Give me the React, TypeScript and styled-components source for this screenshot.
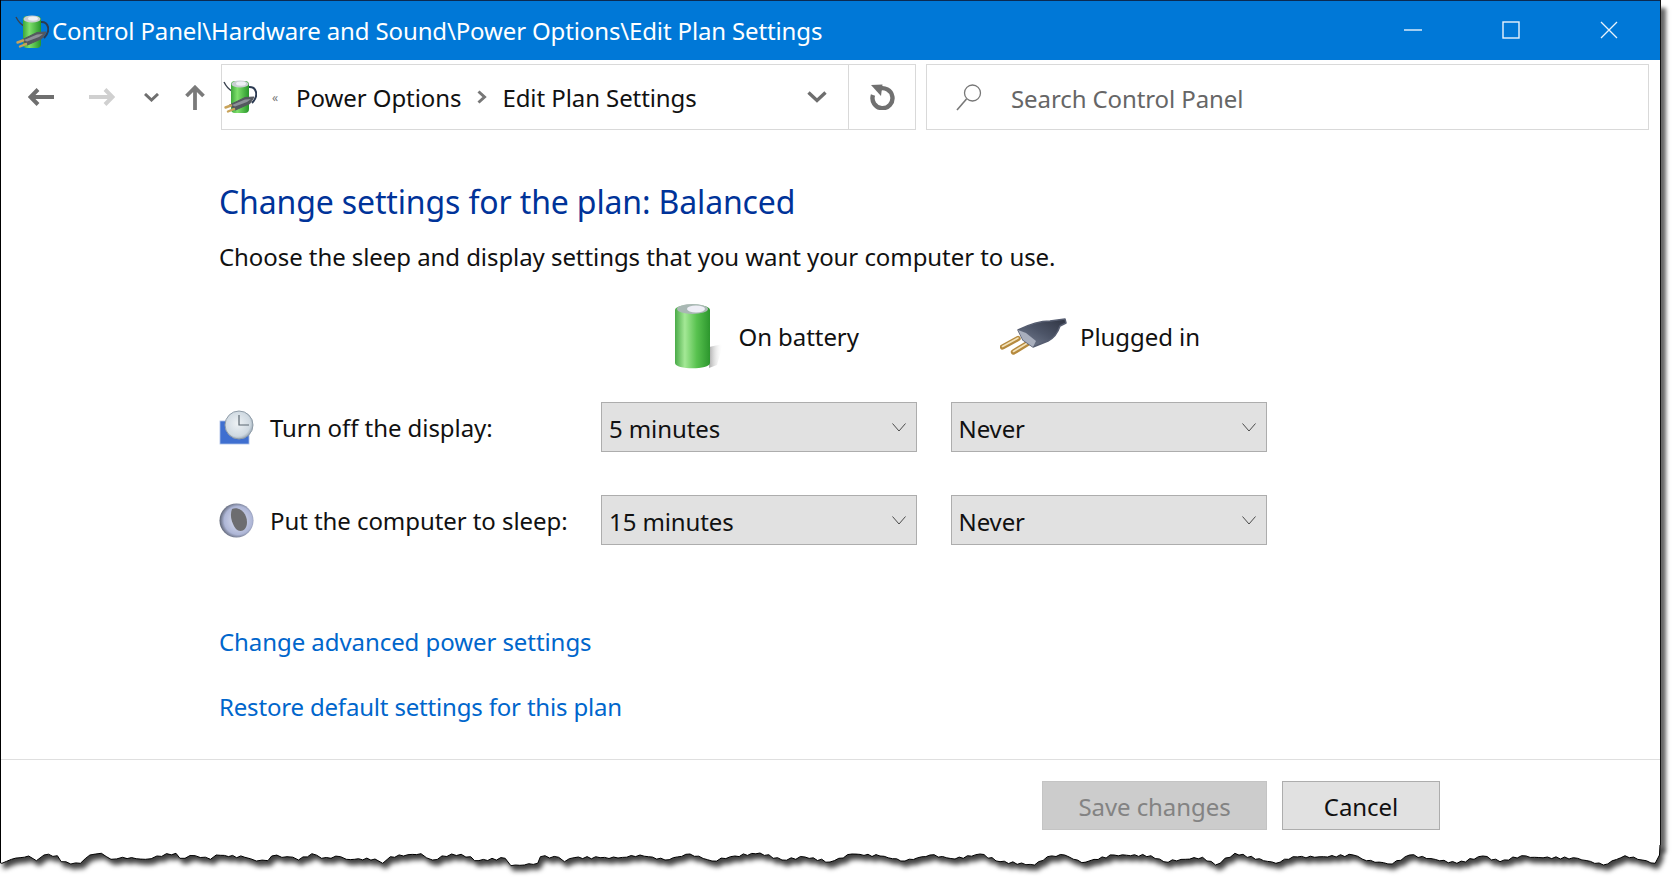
import React, { useId } from "react";
import styled, { createGlobalStyle } from "styled-components";

const GlobalStyle = createGlobalStyle`
  html, body {
    margin: 0;
    padding: 0;
    background: #fff;
  }
  body {
    width: 1676px;
    height: 884px;
    overflow: hidden;
    font-family: "Noto Sans", "Open Sans", sans-serif;
    color: #111;
  }
`;

// torn bottom edge, read off the reference
const LEFT_EDGE = [
  [5, 370], [30, 358], [75, 348], [95, 362], [115, 345], [150, 347], [160, 365], [185, 372], [210, 370],
  [235, 345], [265, 340], [290, 358], [320, 352], [380, 358], [410, 348], [460, 340], [470, 355], [510, 347],
  [550, 358], [565, 345], [640, 352], [670, 363], [700, 362], [710, 348], [750, 350], [780, 360], [815, 341],
  [840, 355], [890, 350], [905, 358], [980, 357], [1000, 370], [1020, 350], [1100, 341], [1130, 360],
  [1180, 342], [1230, 350], [1240, 362], [1320, 355], [1335, 377], [1370, 375], [1405, 370], [1412, 350],
  [1460, 352], [1475, 365], [1500, 353], [1568, 353],
].map(([x, y]) => [x / 2.613, y / 3 - 105]);

const MIDDLE_EDGE = [
  [618, 13], [640, 10], [665, 15], [690, 9], [712, 16], [735, 11], [760, 8], [782, 15], [805, 12], [830, 17],
  [852, 9], [880, 11], [905, 16], [930, 10], [955, 14], [980, 9],
];

const RIGHT_EDGE = [
  [0, 365], [80, 375], [110, 350], [150, 345], [190, 368], [265, 345], [350, 347], [380, 365], [470, 352],
  [500, 375], [545, 340], [640, 370], [680, 350], [730, 352], [820, 345], [850, 362], [910, 372], [950, 345],
  [1060, 370], [1120, 348], [1160, 365], [1210, 347], [1240, 352], [1340, 355], [1400, 375], [1450, 347],
  [1520, 370], [1530, 345],
].map(([x, y]) => [1000 + x / 2.32, y / 3 - 105]);

function buildTornPath() {
  const points = [...LEFT_EDGE, ...MIDDLE_EDGE, ...RIGHT_EDGE];
  let d = "M0.5 0 L0.5 18";
  points.forEach(([x, y], i) => {
    if (i > 0) {
      const [px, py] = points[i - 1];
      const steps = Math.floor((x - px) / 4);
      for (let s = 1; s < steps; s++) {
        const t = s / steps;
        const wobble = Math.sin(i * 12.9 + s * 78.2) * 1.1;
        d += ` L${(px + (x - px) * t).toFixed(1)} ${(py + (y - py) * t + wobble).toFixed(1)}`;
      }
    }
    d += ` L${x.toFixed(1)} ${y.toFixed(1)}`;
  });
  return d + " L1660 0";
}

function PowerPlanIcon() {
  const id = useId();
  return (
    <SmallPlanSvg viewBox="0 0 34 34">
      <defs>
        <linearGradient id={`${id}g`} x1="0" x2="1" y1="0" y2="0">
          <stop offset="0" stopColor="#3da63a" />
          <stop offset="0.35" stopColor="#7fe06c" />
          <stop offset="1" stopColor="#27962a" />
        </linearGradient>
      </defs>
      <path d="M1 2 C3 6 5 9 9 11" fill="none" stroke="#39424f" strokeWidth="1.4" />
      <path d="M25 7 C34 6 36 16 29 23" fill="none" stroke="#2b3a52" strokeWidth="2" />
      <rect x="8" y="1" width="18" height="32" rx="4" fill={`url(#${id}g)`} />
      <ellipse cx="17" cy="4" rx="8.5" ry="3.6" fill="#c9ced2" />
      <ellipse cx="18" cy="3.6" rx="5" ry="2.2" fill="#eef0f4" />
      <path d="M6.5 25 L22 17.5 L31 17 L27 23.5 L12.5 30 Z" fill="#54585f" stroke="#54585f" strokeLinejoin="round" />
      <path d="M9 25 L22 19.5 L28 19 L24 22 L12 26.5 Z" fill="#8d9198" />
      <path d="M2.5 27.5 L8 25.5 M5 31.5 L11 29" stroke="#c9a35a" strokeWidth="2.4" strokeLinecap="round" />
    </SmallPlanSvg>
  );
}

function BatteryIcon() {
  const id = useId();
  return (
    <BatterySvg viewBox="0 0 52 68">
      <defs>
        <linearGradient id={`${id}b`} x1="0" x2="1" y1="0" y2="0">
          <stop offset="0" stopColor="#4aab48" />
          <stop offset="0.28" stopColor="#a4e896" />
          <stop offset="0.62" stopColor="#58c24f" />
          <stop offset="1" stopColor="#2c962d" />
        </linearGradient>
        <linearGradient id={`${id}s`} x1="0" x2="1" y1="0" y2="0">
          <stop offset="0" stopColor="#8f8f8f" stopOpacity="0.75" />
          <stop offset="1" stopColor="#fff" stopOpacity="0" />
        </linearGradient>
      </defs>
      <path d="M36 44 L50 41 L44 62 L36 65 Z" fill={`url(#${id}s)`} />
      <path d="M2 7 C2 0 37 0 37 7 L37 60 C37 67 2 67 2 60 Z" fill={`url(#${id}b)`} />
      <ellipse cx="19.5" cy="6" rx="15.5" ry="5" fill="#a9b8b4" />
      <ellipse cx="23" cy="6" rx="9" ry="3.4" fill="#eeeef6" />
    </BatterySvg>
  );
}

function PlugIcon() {
  const id = useId();
  return (
    <PlugSvg viewBox="0 0 68 37">
      <defs>
        <linearGradient id={`${id}p`} x1="0" x2="1" y1="1" y2="0">
          <stop offset="0" stopColor="#7c8598" />
          <stop offset="0.5" stopColor="#4d5568" />
          <stop offset="1" stopColor="#2f3442" />
        </linearGradient>
      </defs>
      <path d="M2.5 29 L18 20.5 M13.5 34 L30 24" stroke="#b68a3e" strokeWidth="5.4" strokeLinecap="round" />
      <path d="M2.5 28.5 L18 20 M13.5 33.5 L30 23.5" stroke="#f3e2b8" strokeWidth="1.6" strokeLinecap="round" />
      <path
        d="M18 12 C28 7 40 3 50 3 L65 1 L66 5 L60 8 C58 14 54 20 48 23 L33 29 L23 22 Z"
        fill={`url(#${id}p)`}
        stroke="#565d70"
        strokeWidth="1.5"
        strokeLinejoin="round"
      />
      <path d="M18 12 L23 22 L33 29 L36 23 L26 15 Z" fill="#a9afbd" />
    </PlugSvg>
  );
}

function ClockIcon() {
  const id = useId();
  return (
    <RowIconSvg viewBox="0 0 35 35">
      <defs>
        <radialGradient id={`${id}c`} cx="0.45" cy="0.45" r="0.6">
          <stop offset="0" stopColor="#eef2f5" />
          <stop offset="0.75" stopColor="#cfd9e1" />
          <stop offset="1" stopColor="#8d9ca9" />
        </radialGradient>
      </defs>
      <rect x="1" y="11" width="29" height="23" fill="#3f6fd0" stroke="#a9bde6" strokeWidth="0.8" />
      <circle cx="20" cy="15" r="14" fill={`url(#${id}c)`} stroke="#8f9ca8" strokeWidth="1" />
      <path d="M20 5 L20 15 L30 15" fill="none" stroke="#5b6770" strokeWidth="1.2" />
    </RowIconSvg>
  );
}

function MoonIcon() {
  const id = useId();
  return (
    <RowIconSvg viewBox="0 0 35 35">
      <defs>
        <radialGradient id={`${id}m`} cx="0.55" cy="0.5" r="0.55">
          <stop offset="0" stopColor="#dfe3f2" />
          <stop offset="0.75" stopColor="#aeb6d6" />
          <stop offset="1" stopColor="#5c6272" />
        </radialGradient>
      </defs>
      <circle cx="17.5" cy="17.5" r="17" fill={`url(#${id}m)`} />
      <path d="M13 6 C20 3 28 10 28 19 C28 28 21 30 17 26 C14 22 10 14 13 6 Z" fill="#6d6d70" />
    </RowIconSvg>
  );
}

function SelectChevron() {
  return (
    <ChevronSvg viewBox="0 0 14 9">
      <path d="M0.5 0.5 L7 8 L13.5 0.5" fill="none" stroke="#4a4a4a" strokeWidth="1" />
    </ChevronSvg>
  );
}

function Dropdown({ value }: { value: string }) {
  return (
    <Select>
      <SelectValue>{value}</SelectValue>
      <SelectChevron />
    </Select>
  );
}

export default function App() {
  return (
    <>
      <GlobalStyle />
      <Page>
        <Window>
          <TitleBar>
            <TitleIcon>
              <PowerPlanIcon />
            </TitleIcon>
            <TitleText>Control Panel\Hardware and Sound\Power Options\Edit Plan Settings</TitleText>
            <WindowControls>
              <WindowButton>
                <svg width="18" height="2" viewBox="0 0 18 2">
                  <path d="M0 1 H18" stroke="#e8f3fc" strokeWidth="1.4" />
                </svg>
              </WindowButton>
              <WindowButton>
                <svg width="18" height="18" viewBox="0 0 18 18">
                  <rect x="1" y="1" width="16" height="16" fill="none" stroke="#e8f3fc" strokeWidth="1.4" />
                </svg>
              </WindowButton>
              <WindowButton>
                <svg width="18" height="18" viewBox="0 0 18 18">
                  <path d="M1 1 L17 17 M17 1 L1 17" stroke="#e8f3fc" strokeWidth="1.3" />
                </svg>
              </WindowButton>
            </WindowControls>
          </TitleBar>

          <Toolbar>
            <NavArea>
              <NavIcon $left={27} width="26" height="18" viewBox="0 0 26 18">
                <path d="M26 9 H3 M10 1.5 L2.5 9 L10 16.5" fill="none" stroke="#6f6f6f" strokeWidth="4" />
              </NavIcon>
              <NavIcon $left={35} width="26" height="18" viewBox="0 0 26 18">
                <path d="M0 9 H23 M16 1.5 L23.5 9 L16 16.5" fill="none" stroke="#d0d0d0" strokeWidth="4" />
              </NavIcon>
              <NavIcon $left={29} width="15" height="9" viewBox="0 0 15 9">
                <path d="M1 1 L7.5 7 L14 1" fill="none" stroke="#6f6f6f" strokeWidth="3" />
              </NavIcon>
              <NavIcon $left={26} width="20" height="25" viewBox="0 0 20 25">
                <path d="M10 25 V3 M1.5 11 L10 2.5 L18.5 11" fill="none" stroke="#7a7a7a" strokeWidth="3.8" />
              </NavIcon>
            </NavArea>

            <AddressBar>
              <Breadcrumbs>
                <PowerPlanIcon />
                <Overflow>«</Overflow>
                <Crumb>Power Options</Crumb>
                <CrumbSeparator viewBox="0 0 10 14">
                  <path d="M1.5 1.5 L7.5 7 L1.5 12.5" fill="none" stroke="#777" strokeWidth="3" />
                </CrumbSeparator>
                <Crumb>Edit Plan Settings</Crumb>
              </Breadcrumbs>
              <svg width="20" height="12" viewBox="0 0 20 12">
                <path d="M1.5 1.5 L10 9.5 L18.5 1.5" fill="none" stroke="#6e6e6e" strokeWidth="3.4" />
              </svg>
              <RefreshButton>
                <svg width="25" height="26" viewBox="0 0 25 26">
                  <path d="M8.5 5 A10 10 0 1 1 3 11" fill="none" stroke="#707070" strokeWidth="4.4" />
                  <path d="M1 1 L12.5 0.5 L11 12 Z" fill="#707070" />
                </svg>
              </RefreshButton>
            </AddressBar>

            <SearchBox>
              <svg width="26" height="27" viewBox="0 0 26 27">
                <circle cx="16.5" cy="9" r="8" fill="none" stroke="#777" strokeWidth="1.3" />
                <path d="M10.5 15 L1 26" stroke="#777" strokeWidth="1.6" />
              </svg>
              <SearchText>Search Control Panel</SearchText>
            </SearchBox>
          </Toolbar>

          <Content>
            <Heading>Change settings for the plan: Balanced</Heading>
            <Description>Choose the sleep and display settings that you want your computer to use.</Description>

            <ColumnHeads>
              <span />
              <ColumnHead $inset={72}>
                <BatteryIcon />
                <ColumnLabel>On battery</ColumnLabel>
              </ColumnHead>
              <ColumnHead $inset={50}>
                <PlugIcon />
                <ColumnLabel>Plugged in</ColumnLabel>
              </ColumnHead>
            </ColumnHeads>

            <SettingsGrid>
              <RowLabel>
                <ClockIcon />
                <RowText>Turn off the display:</RowText>
              </RowLabel>
              <Dropdown value="5 minutes" />
              <Dropdown value="Never" />

              <RowLabel>
                <MoonIcon />
                <RowText>Put the computer to sleep:</RowText>
              </RowLabel>
              <Dropdown value="15 minutes" />
              <Dropdown value="Never" />
            </SettingsGrid>

            <Links>
              <TextLink $spacing={-0.07}>Change advanced power settings</TextLink>
              <TextLink $spacing={-0.18}>Restore default settings for this plan</TextLink>
            </Links>
          </Content>

          <Footer>
            <FooterButton $width={225} disabled>
              Save changes
            </FooterButton>
            <FooterButton $width={158}>Cancel</FooterButton>
          </Footer>
        </Window>

        <TornEdge viewBox="0 0 1676 39">
          <defs>
            <filter id="tornShadow" x="-2%" y="-50%" width="104%" height="220%">
              <feDropShadow dx="3" dy="5" stdDeviation="2.6" floodColor="#000" floodOpacity="0.75" />
            </filter>
          </defs>
          <path d={buildTornPath()} fill="#fff" stroke="#000" strokeWidth="1" filter="url(#tornShadow)" />
        </TornEdge>
      </Page>
    </>
  );
}

const Page = styled.div`
  width: 1676px;
  height: 884px;
  overflow: hidden;
`;

const Window = styled.div`
  box-sizing: border-box;
  width: 1661px;
  height: 845px;
  display: flex;
  flex-direction: column;
  background: #fff;
  border-left: 1px solid #000;
  border-right: 1px solid #111;
  box-shadow: 5px 8px 4px rgba(0, 0, 0, 0.6);
`;

const TitleBar = styled.div`
  box-sizing: border-box;
  height: 60px;
  flex: none;
  display: flex;
  align-items: center;
  background: #0078d7;
  border-top: 1px solid #0b2a52;
`;

const TitleIcon = styled.div`
  display: flex;
  margin-left: 14px;
  margin-top: 2px;
`;

const TitleText = styled.div`
  margin-left: 3px;
  color: #fff;
  font-size: 24px;
  letter-spacing: -0.14px;
  white-space: nowrap;
`;

const WindowControls = styled.div`
  margin-left: auto;
  padding-right: 2px;
  display: flex;
`;

const WindowButton = styled.div`
  box-sizing: border-box;
  width: 98px;
  height: 58px;
  padding-bottom: 2px;
  display: flex;
  align-items: center;
  justify-content: center;
`;

const Toolbar = styled.div`
  box-sizing: border-box;
  height: 74px;
  flex: none;
  display: flex;
  align-items: flex-start;
  padding-top: 4px;
`;

const NavArea = styled.div`
  width: 220px;
  height: 66px;
  flex: none;
  display: flex;
  align-items: center;
`;

const NavIcon = styled.svg<{ $left: number }>`
  flex: none;
  margin-left: ${(p) => p.$left}px;
`;

const AddressBar = styled.div`
  box-sizing: border-box;
  width: 695px;
  height: 66px;
  flex: none;
  display: flex;
  align-items: center;
  border: 1px solid #d9d9d9;
`;

const Breadcrumbs = styled.div`
  flex: 1;
  display: flex;
  align-items: center;
  padding-left: 1px;
`;

const SmallPlanSvg = styled.svg`
  width: 34px;
  height: 34px;
  flex: none;
`;

const Overflow = styled.span`
  margin: 0 18px 0 15px;
  font-size: 12px;
  color: #777;
`;

const Crumb = styled.span`
  padding-top: 1px;
  font-size: 24px;
  letter-spacing: -0.08px;
  white-space: nowrap;
`;

const CrumbSeparator = styled.svg`
  width: 10px;
  height: 14px;
  flex: none;
  margin: 0 15px 0 16px;
`;

const RefreshButton = styled.div`
  width: 66px;
  height: 64px;
  margin-left: 21px;
  flex: none;
  display: flex;
  align-items: center;
  justify-content: center;
  border-left: 1px solid #d9d9d9;
`;

const SearchBox = styled.div`
  box-sizing: border-box;
  width: 723px;
  height: 66px;
  margin-left: 10px;
  flex: none;
  display: flex;
  align-items: center;
  padding-left: 29px;
  border: 1px solid #d9d9d9;
`;

const SearchText = styled.span`
  margin-left: 29px;
  padding-top: 3px;
  font-size: 24px;
  letter-spacing: -0.1px;
  color: #666;
`;

const Content = styled.main`
  flex: 1;
  padding: 46px 0 0 218px;
`;

const Heading = styled.h1`
  margin: 0;
  font-size: 32px;
  line-height: 44px;
  font-weight: 400;
  letter-spacing: -0.14px;
  color: #003399;
  white-space: nowrap;
`;

const Description = styled.p`
  margin: 16px 0 0;
  font-size: 24px;
  line-height: 34px;
  letter-spacing: -0.07px;
  white-space: nowrap;
`;

const ColumnHeads = styled.div`
  margin-top: 29px;
  display: grid;
  grid-template-columns: 348px 316px 317px;
  grid-template-rows: 67px;
  column-gap: 33.5px;
`;

const ColumnHead = styled.div<{ $inset: number }>`
  display: flex;
  align-items: center;
  padding-left: ${(p) => p.$inset}px;
`;

const BatterySvg = styled.svg`
  width: 52px;
  height: 68px;
  flex: none;
  margin-right: 14px;
`;

const PlugSvg = styled.svg`
  width: 68px;
  height: 37px;
  flex: none;
  margin-right: 12px;
`;

const ColumnLabel = styled.span`
  font-size: 24px;
  letter-spacing: -0.07px;
`;

const SettingsGrid = styled.div`
  margin-top: 32px;
  display: grid;
  grid-template-columns: 348.5px 316px 316.5px;
  grid-template-rows: 50px 50px;
  column-gap: 33.5px;
  row-gap: 43px;
`;

const RowLabel = styled.div`
  display: flex;
  align-items: center;
  gap: 16px;
  white-space: nowrap;
`;

const RowText = styled.span`
  padding-top: 1px;
  font-size: 24px;
  letter-spacing: -0.07px;
`;

const RowIconSvg = styled.svg`
  width: 35px;
  height: 35px;
  flex: none;
`;

const Select = styled.div`
  box-sizing: border-box;
  display: flex;
  align-items: center;
  justify-content: space-between;
  padding: 0 10px 0 7px;
  background: #e1e1e1;
  border: 1px solid #adadad;
`;

const SelectValue = styled.span`
  padding-top: 2px;
  font-size: 24px;
  letter-spacing: -0.1px;
`;

const ChevronSvg = styled.svg`
  width: 14px;
  height: 9px;
`;

const Links = styled.div`
  margin-top: 80px;
  display: flex;
  flex-direction: column;
  gap: 31px;
`;

const TextLink = styled.a<{ $spacing: number }>`
  font-size: 24px;
  line-height: 34px;
  letter-spacing: ${(p) => p.$spacing}px;
  color: #0066cc;
  white-space: nowrap;
`;

const Footer = styled.footer`
  box-sizing: border-box;
  height: 86px;
  flex: none;
  display: flex;
  justify-content: flex-end;
  align-items: flex-start;
  gap: 15px;
  padding: 21px 220px 0 0;
  border-top: 1px solid #dfdfdf;
`;

const FooterButton = styled.button<{ $width: number }>`
  box-sizing: border-box;
  width: ${(p) => p.$width}px;
  height: 49px;
  padding: 1px 0 0;
  font-family: inherit;
  font-size: 24px;
  letter-spacing: -0.07px;
  color: ${(p) => (p.disabled ? "#838383" : "#111")};
  background: ${(p) => (p.disabled ? "#cccccc" : "#e1e1e1")};
  border: 1px solid ${(p) => (p.disabled ? "#c4c4c4" : "#adadad")};
`;

const TornEdge = styled.svg`
  display: block;
  width: 1676px;
  height: 39px;
`;
